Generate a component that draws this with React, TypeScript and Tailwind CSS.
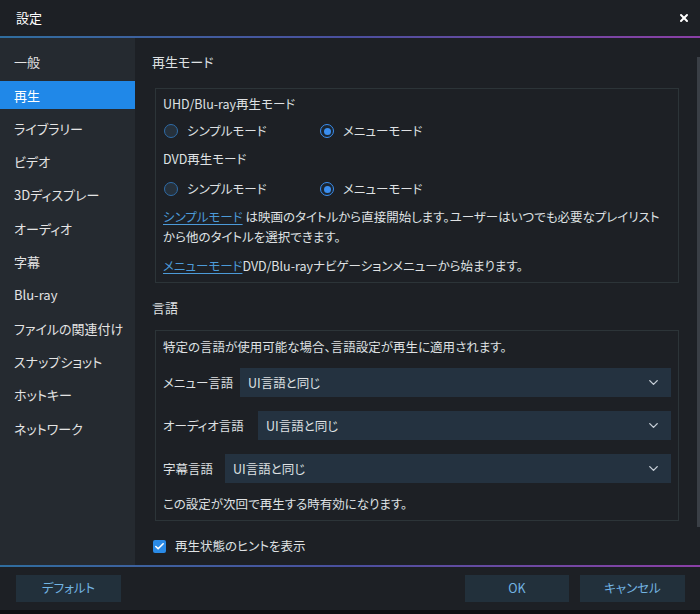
import { ChevronDown, X, Check } from 'lucide-react'
import clsx from 'clsx'

const navItems = [
  '一般',
  '再生',
  'ライブラリー',
  'ビデオ',
  '3Dディスプレー',
  'オーディオ',
  '字幕',
  'Blu-ray',
  'ファイルの関連付け',
  'スナップショット',
  'ホットキー',
  'ネットワーク',
]

const Radio = ({ checked, label }: { checked?: boolean; label: string }) => (
  <div className="flex items-center gap-[9px]">
    <span
      className={clsx(
        'flex h-[14px] w-[14px] items-center justify-center rounded-full border-[1.5px]',
        checked ? 'border-[#3a8ef0] bg-[#1b2530]' : 'border-[#2f6ca8] bg-[#26313c]',
      )}
    >
      {checked && <span className="h-[7px] w-[7px] rounded-full bg-[#3a8ef0]" />}
    </span>
    <span>{label}</span>
  </div>
)

const RadioRow = () => (
  <div className="flex h-5 items-center pl-[1px]">
    <div className="w-[156px]">
      <Radio label="シンプルモード" />
    </div>
    <Radio checked label="メニューモード" />
  </div>
)

const LangSelect = ({ label, labelWidth }: { label: string; labelWidth: string }) => (
  <div className="flex items-center">
    <span className={labelWidth}>{label}</span>
    <div className="flex h-[29px] flex-1 items-center justify-between bg-[#243240] pl-2 pr-[10px]">
      <span>UI言語と同じ</span>
      <ChevronDown size={15} strokeWidth={2.2} className="text-[#c6ced6]" />
    </div>
  </div>
)

const Gradient = () => (
  <div className="h-[2px] bg-gradient-to-r from-[#2f6d9e] via-[#4a4f9e] to-[#8a3fa6]" />
)

export default function App() {
  return (
    <div className="flex h-[614px] w-[700px] flex-col bg-[#1d2025] text-[12.5px] text-[#dfe1e3] [font-family:'Noto_Sans_CJK_JP','Noto_Sans',sans-serif] [font-feature-settings:'palt']">
      <header className="flex h-9 items-center justify-between pl-4 pr-[10px]">
        <span className="text-[13px] text-white">設定</span>
        <X size={12} strokeWidth={4} className="text-white" />
      </header>
      <Gradient />

      <main className="flex h-[527px]">
        <aside className="flex w-[135px] flex-col gap-[5.3px] bg-[#252a30] pt-[10px]">
          {navItems.map((item) => (
            <div
              key={item}
              className={clsx(
                'flex h-7 items-center pl-[14px] text-[13px]',
                item === '再生' ? 'bg-[#2088e8] text-white' : 'text-[#e4e4e4]',
              )}
            >
              {item}
            </div>
          ))}
        </aside>

        <section className="flex-1 pl-[17px] pt-[14px] leading-5">
          <h2 className="text-[13px]">再生モード</h2>
          <div className="ml-[3px] mt-4 w-[524px] border border-[#2c3438] px-[7px] pb-[6px] pt-[5px]">
            <p>UHD/Blu-ray再生モード</p>
            <div className="mt-[7px]">
              <RadioRow />
            </div>
            <p className="mt-2">DVD再生モード</p>
            <div className="mt-[10px]">
              <RadioRow />
            </div>
            <p className="mt-2">
              <span className="text-[#4c9ad8] underline underline-offset-2">シンプルモード</span>{' '}
              は映画のタイトルから直接開始します。ユーザーはいつでも必要なプレイリスト
              <br />
              から他のタイトルを選択できます。
            </p>
            <p className="mt-[9px]">
              <span className="text-[#4c9ad8] underline underline-offset-2">メニューモード</span>
              DVD/Blu-rayナビゲーションメニューから始まります。
            </p>
          </div>

          <h2 className="mt-[15px] text-[13px]">言語</h2>
          <div className="ml-[3px] mt-3 flex w-[524px] flex-col border border-[#2c3438] px-[7px] pb-[6px] pt-[6px]">
            <p>特定の言語が使用可能な場合、言語設定が再生に適用されます。</p>
            <div className="mt-[11px] flex flex-col gap-[14px]">
              <LangSelect label="メニュー言語" labelWidth="w-[77px]" />
              <LangSelect label="オーディオ言語" labelWidth="w-[95px]" />
              <LangSelect label="字幕言語" labelWidth="w-[62px]" />
            </div>
            <p className="mt-[11px]">この設定が次回で再生する時有効になります。</p>
          </div>

          <label className="mt-[15px] flex h-5 items-center gap-[9px] pl-[1px]">
            <span className="flex h-[13px] w-[13px] items-center justify-center rounded-[2px] bg-[#2a8ae6]">
              <Check size={11} strokeWidth={3.5} className="text-white" />
            </span>
            <span>再生状態のヒントを表示</span>
          </label>
        </section>

        <div className="w-[3px] pt-[19px]">
          <div className="h-[470px] bg-[#3a3f46]" />
        </div>
      </main>

      <Gradient />
      <footer className="flex h-[43px] items-center justify-between pl-4 pr-[15px] text-[12.5px] text-[#72b4e2]">
        <button className="h-[27px] w-[105px] bg-[#22303b]">デフォルト</button>
        <div className="flex gap-[11px]">
          <button className="h-[27px] w-[104px] bg-[#22303b]">OK</button>
          <button className="h-[27px] w-[105px] bg-[#22303b]">キャンセル</button>
        </div>
      </footer>
      <div className="h-1 bg-[#0e0f11]" />
    </div>
  )
}
